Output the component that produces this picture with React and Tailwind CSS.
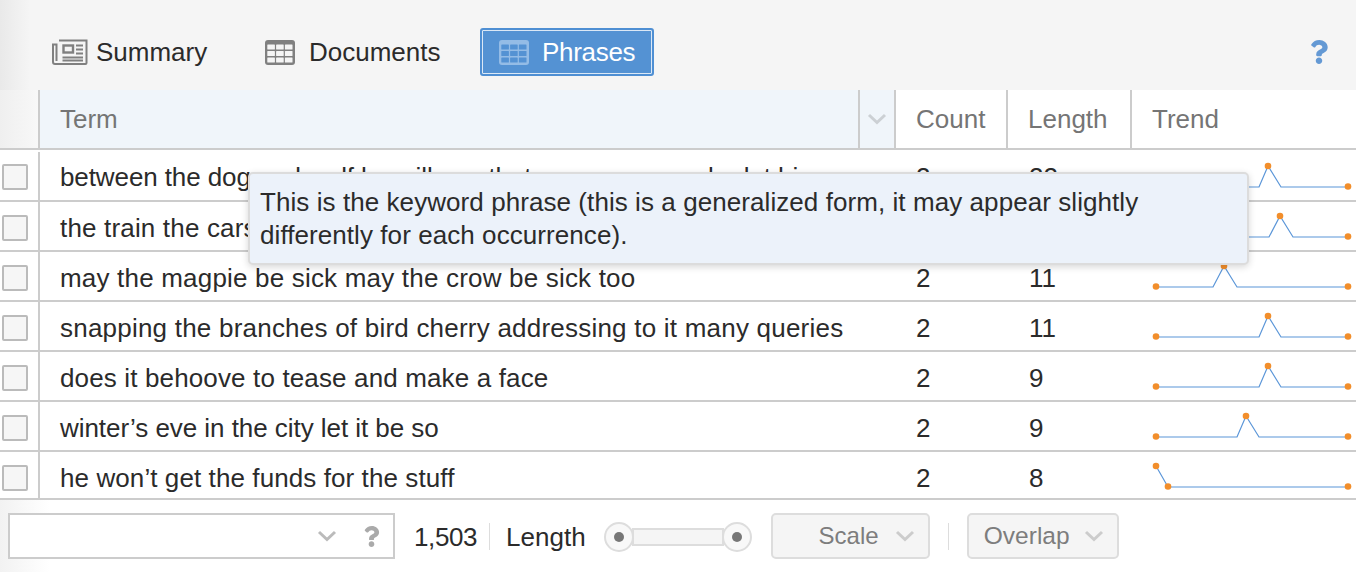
import React from "react";
import { FaQuestion } from "react-icons/fa";

const Grid = ({ color, cell }) => (
  <svg width="30" height="25" viewBox="0 0 30 25" className="shrink-0">
    <rect width="30" height="25" rx="3" fill={color} />
    {[0, 1, 2].map((r) =>
      [0, 1, 2].map((c) => (
        <rect key={`${r}${c}`} x={2.3 + c * 8.8} y={4.6 + r * 6.4} width="7.6" height="5" fill={cell} rx="0.5" />
      ))
    )}
  </svg>
);

const News = () => (
  <svg width="36" height="26" viewBox="0 0 36 26" className="shrink-0" fill="none" stroke="#808080" strokeWidth="2">
    <path d="M7 1.5H34.5V24a1 1 0 0 1-1 1H3A2 2 0 0 1 1 23V5.5H4.5V22" />
    <rect x="11.5" y="6.5" width="9.5" height="7" strokeWidth="2.4" />
    <path d="M24 6.5H31M24 10.5H31M24 14.5H31M10.5 18.5H31M10.5 21.5H31" strokeWidth="2" />
  </svg>
);

const Chevron = ({ color = "#bbb", w = 20 }) => (
  <svg width={w} height="12" viewBox="0 0 20 12" fill="none" stroke={color} strokeWidth="3">
    <path d="M2 2L10 9.5L18 2" />
  </svg>
);

const rows = [
  ["between the dog and wolf he will see that someone may be let him", "2", "22", [1259, 1268, 1281], "tracking-[-0.1px]"],
  ["the train the cars and the wheels that run along the tracks", "2", "20", [1269, 1280, 1293], "tracking-[0.17px]"],
  ["may the magpie be sick may the crow be sick too", "2", "11", [1213, 1224, 1237], "tracking-[0.19px]"],
  ["snapping the branches of bird cherry addressing to it many queries", "2", "11", [1259, 1268, 1281], "tracking-[0.22px]"],
  ["does it behoove to tease and make a face", "2", "9", [1259, 1268, 1281], "tracking-[0.14px]"],
  ["winter’s eve in the city let it be so", "2", "9", [1237, 1246, 1259], "tracking-[-0.05px]"],
  ["he won’t get the funds for the stuff", "2", "8", null, "tracking-[0.09px]"],
];

const Spark = ({ pts }) => {
  const o = 1132;
  const sx = 1156 - o;
  const ex = 1348 - o;
  const top = 14;
  const base = 35;
  const dot = "#f28e2b";
  return (
    <svg width="224" height="48" viewBox="0 0 224 48" className="block">
      {pts ? (
        <>
          <path d={`M${sx} ${base}H${pts[0] - o}L${pts[1] - o} ${top}L${pts[2] - o} ${base}H${ex}`} fill="none" stroke="#5b96d8" strokeWidth="1.2" />
          <circle cx={pts[1] - o} cy={top} r="3.3" fill={dot} />
          <circle cx={sx} cy={base - 0.5} r="3.3" fill={dot} />
        </>
      ) : (
        <>
          <path d={`M${sx} ${top}L${sx + 12} ${base}H${ex}`} fill="none" stroke="#5b96d8" strokeWidth="1.2" />
          <circle cx={sx} cy={top} r="3.3" fill={dot} />
          <circle cx={sx + 12} cy={base - 0.5} r="3.3" fill={dot} />
        </>
      )}
      <circle cx={ex} cy={base - 0.5} r="3.3" fill={dot} />
    </svg>
  );
};

export default function App() {
  return (
    <div className="relative w-[1356px] h-[572px] overflow-hidden bg-white text-[26px] text-[#2b2b2b] font-['Liberation_Sans',Arial,sans-serif] flex flex-col">
      {/* top toolbar */}
      <div className="h-[90px] shrink-0 flex items-center bg-[linear-gradient(90deg,#e9e9e9_0px,#f5f5f5_30px)] pl-[52px] pr-[25px] pt-[14px]">
        <div className="flex items-center gap-2 w-[213px]">
          <News />
          <span>Summary</span>
        </div>
        <div className="flex items-center gap-[14px] w-[215px]">
          <Grid color="#808080" cell="#f5f5f5" />
          <span>Documents</span>
        </div>
        <div className="w-[174px] h-12 rounded-[3px] border-2 border-[#4f8fd3] bg-[#5492d3] shadow-[inset_0_0_0_1px_#dbe8f6] flex items-center pl-[17px] gap-[13px] text-white">
          <Grid color="#94bce6" cell="#5492d3" />
          <span className="tracking-[-0.3px]">Phrases</span>
        </div>
        <FaQuestion className="ml-auto text-[#6499d4] text-[24px]" />
      </div>

      {/* header */}
      <div className="h-[60px] shrink-0 flex border-b-2 border-[#ccc] text-[#757575]">
        <div className="w-10 border-r-2 border-[#ccc] bg-[linear-gradient(90deg,#efefef,#f8f8f8)]" />
        <div className="w-[820px] border-r-2 border-[#ccc] bg-[#f0f5fa] pl-5 flex items-center">Term</div>
        <div className="w-9 border-r-2 border-[#ccc] bg-[#f0f5fa] flex items-center justify-center">
          <Chevron color="#ccd0d4" />
        </div>
        <div className="w-28 border-r-2 border-[#ccc] pl-5 flex items-center">Count</div>
        <div className="w-[124px] border-r-2 border-[#ccc] pl-5 flex items-center">Length</div>
        <div className="flex-1 pl-5 flex items-center">Trend</div>
      </div>

      {/* rows */}
      {rows.map(([term, count, length, pts, track], i) => {
        const cellPad = i === 6 ? "pt-[6px]" : i === 0 ? "pt-[2px]" : "pt-1";
        return (
          <div key={i} className={`${i === 0 ? "h-[52px] pt-[2px]" : i === 6 ? "h-[48px]" : "h-[50px]"} shrink-0 flex border-b-2 border-[#ccc]`}>
            <div className={`w-10 shrink-0 border-r-2 border-[#ccc] flex items-center pl-[2px] ${cellPad}`}>
              <div className="w-[26px] h-[26px] border-2 border-[#bbb] bg-[#f6f6f6] rounded-[2px]" />
            </div>
            <div className={`w-[856px] shrink-0 pl-5 flex items-center whitespace-nowrap overflow-hidden ${track} ${cellPad}`}>{term}</div>
            <div className={`w-28 shrink-0 pl-5 flex items-center ${cellPad}`}>{count}</div>
            <div className={`w-[124px] shrink-0 pl-[21px] flex items-center ${cellPad}`}>{length}</div>
            <div className="flex-1">
              <Spark pts={pts} />
            </div>
          </div>
        );
      })}

      {/* bottom toolbar */}
      <div className="flex-1 flex items-center pl-2 bg-[linear-gradient(90deg,#f2f2f2_0px,#ffffff_50px)]">
        <div className="w-[387px] h-[46px] border-2 border-[#ccc] bg-white flex items-center justify-end pr-[11px] gap-6">
          <Chevron color="#bbb" />
          <FaQuestion className="text-[#aaa] text-[21px]" />
        </div>
        <span className="ml-[19px] pt-[2px] tracking-[-0.4px]">1,503</span>
        <div className="w-px h-[27px] bg-[#ddd] ml-3" />
        <span className="ml-4 pt-[2px]">Length</span>
        <div className="ml-[18px] w-[148px] h-8 flex items-center pt-[2px]">
          <div className="w-[30px] h-[30px] rounded-full border-2 border-[#ddd] bg-[#f8f8f8] flex items-center justify-center shrink-0 relative z-10">
            <div className="w-2.5 h-2.5 rounded-full bg-[#777]" />
          </div>
          <div className="flex-1 h-[18px] -mx-[2px] border-2 border-[#ddd] bg-[#f5f5f5]" />
          <div className="w-[30px] h-[30px] rounded-full border-2 border-[#ddd] bg-[#f8f8f8] flex items-center justify-center shrink-0 relative z-10">
            <div className="w-2.5 h-2.5 rounded-full bg-[#777]" />
          </div>
        </div>
        <div className="ml-[19px] w-[159px] h-[46px] rounded-[5px] border-2 border-[#ddd] bg-[#f5f5f5] flex items-center justify-end pr-[13px] gap-4 text-[#7d7d7d] text-[24px]">
          <span>Scale</span>
          <Chevron color="#ccc" />
        </div>
        <div className="w-px h-[27px] bg-[#ddd] ml-[18px]" />
        <div className="ml-[18px] w-[152px] h-[46px] rounded-[5px] border-2 border-[#ddd] bg-[#f5f5f5] flex items-center justify-end pr-[13px] gap-[14px] text-[#7d7d7d] text-[24.5px]">
          <span>Overlap</span>
          <Chevron color="#ccc" />
        </div>
      </div>

      {/* tooltip */}
      <div className="absolute left-[248px] top-[172px] w-[1001px] h-[93px] rounded-[5px] border-2 border-[#dcdcdc] bg-[#ecf2fa] shadow-[0_2px_7px_rgba(0,0,0,0.16)] pl-[10px] pr-[60px] pt-3 text-[26px] leading-[33px] tracking-[0.07px]">
        This is the keyword phrase (this is a generalized form, it may appear slightly differently for each occurrence).
      </div>
    </div>
  );
}
